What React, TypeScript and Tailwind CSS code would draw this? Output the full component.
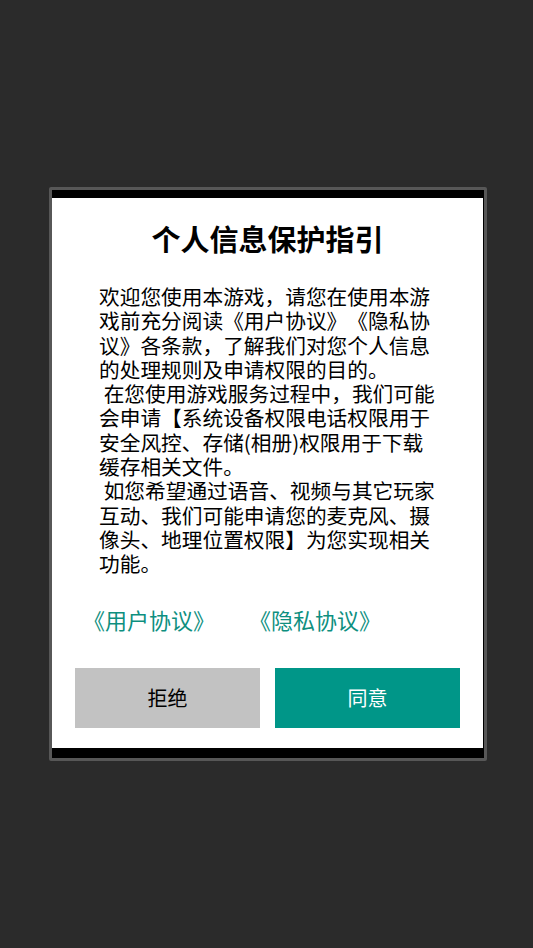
import React from 'react';

const lines = [
  '欢迎您使用本游戏，请您在使用本游',
  '戏前充分阅读《用户协议》《隐私协',
  '议》各条款，了解我们对您个人信息',
  '的处理规则及申请权限的目的。',
  ' 在您使用游戏服务过程中，我们可能',
  '会申请【系统设备权限电话权限用于',
  '安全风控、存储(相册)权限用于下载',
  '缓存相关文件。',
  ' 如您希望通过语音、视频与其它玩家',
  '互动、我们可能申请您的麦克风、摄',
  '像头、地理位置权限】为您实现相关',
  '功能。',
];

const font = { fontFamily: '"Noto Sans CJK SC", "Noto Sans", sans-serif' };

export default function App() {
  return (
    <div
      className="w-full h-[948px] bg-[#2b2b2b] flex items-center justify-center [text-spacing-trim:space-all]"
      style={font}
    >
      <div className="ml-[3px] w-[438px] border-[3px] border-[#575757] rounded-[2px] bg-black pt-[8px] pb-[10px] pr-[1px]">
        <div className="bg-white h-[550px] flex flex-col">
          {/* title */}
          <h1 className="mt-[22px] text-center text-[29px] leading-[36px] font-bold text-black">
            个人信息保护指引
          </h1>

          {/* body */}
          <div className="mt-[28px] pl-[47px] text-[20.7px] leading-[24.3px] text-black">
            {lines.map((l, i) => (
              <div key={i} className="whitespace-pre">
                {l}
              </div>
            ))}
          </div>

          {/* links */}
          <div className="mt-[28px] pl-[31px] flex gap-[34px] text-[22px] leading-[30px] text-[#0e8f7f]">
            <span>《用户协议》</span>
            <span>《隐私协议》</span>
          </div>

          {/* buttons */}
          <div className="mt-[34px] px-[23px] flex gap-[15px]">
            <button className="flex-1 h-[60px] bg-[#c2c2c2] text-[20px] text-black">
              拒绝
            </button>
            <button className="flex-1 h-[60px] bg-[#009688] text-[20px] text-white">
              同意
            </button>
          </div>
        </div>
      </div>
    </div>
  );
}
